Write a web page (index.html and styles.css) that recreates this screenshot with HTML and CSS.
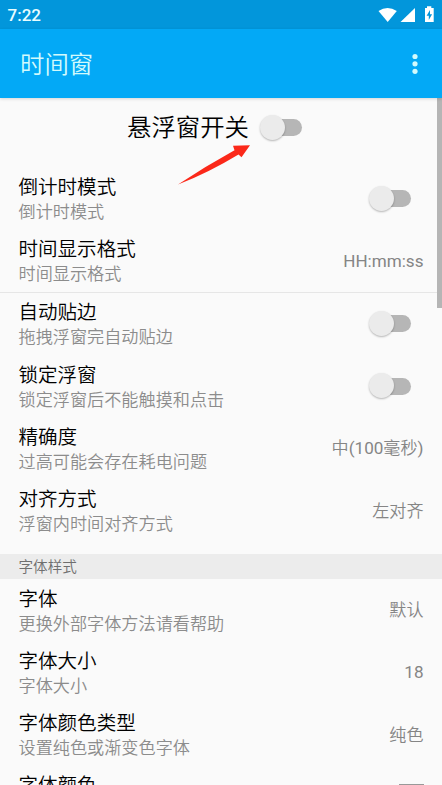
FILE: index.html
```html
<!DOCTYPE html>
<html lang="zh-CN">
<head>
<meta charset="utf-8">
<title>时间窗</title>
<link rel="stylesheet" href="styles.css">
</head>
<body>
<div class="screen">
  <header class="status">
    <span class="clock">7:22</span>
    <svg class="status-icons" width="56" height="18" viewBox="0 0 56 18" fill="#fff">
      <path d="M0.5 5Q9.5-1 18.8 5L9.7 16Z"/>
      <path d="M22.5 16H37V2Z"/>
      <path fill-rule="evenodd" d="M47 2H49V0.3H53.3V2H55.7V16H47ZM52 4L48.6 9.8H50.8V14L54.1 8.2H52Z"/>
    </svg>
  </header>
  <div class="appbar">
    <h1 class="appbar-title">时间窗</h1>
    <svg class="more" width="6" height="22" viewBox="0 0 6 22" fill="#d2fafc"><circle cx="3" cy="3.5" r="2.6"/><circle cx="3" cy="10.8" r="2.6"/><circle cx="3" cy="18.3" r="2.6"/></svg>
  </div>
  <main class="content">
    <div class="master"><span>悬浮窗开关</span><i class="switch"></i></div>
    <section class="group">
      <div class="row"><div class="label"><div class="title">倒计时模式</div><div class="summary">倒计时模式</div></div><i class="switch"></i></div>
      <div class="row"><div class="label"><div class="title">时间显示格式</div><div class="summary">时间显示格式</div></div><span class="value latin">HH:mm:ss</span></div>
    </section>
    <section class="group divided">
      <div class="row"><div class="label"><div class="title">自动贴边</div><div class="summary">拖拽浮窗完自动贴边</div></div><i class="switch"></i></div>
      <div class="row"><div class="label"><div class="title">锁定浮窗</div><div class="summary">锁定浮窗后不能触摸和点击</div></div><i class="switch"></i></div>
      <div class="row"><div class="label"><div class="title">精确度</div><div class="summary">过高可能会存在耗电问题</div></div><span class="value">中<span class="latin">(100</span>毫秒<span class="latin">)</span></span></div>
      <div class="row"><div class="label"><div class="title">对齐方式</div><div class="summary">浮窗内时间对齐方式</div></div><span class="value">左对齐</span></div>
    </section>
    <h2 class="section">字体样式</h2>
    <section class="group">
      <div class="row"><div class="label"><div class="title">字体</div><div class="summary">更换外部字体方法请看帮助</div></div><span class="value">默认</span></div>
      <div class="row"><div class="label"><div class="title">字体大小</div><div class="summary">字体大小</div></div><span class="value latin">18</span></div>
      <div class="row"><div class="label"><div class="title">字体颜色类型</div><div class="summary">设置纯色或渐变色字体</div></div><span class="value">纯色</span></div>
      <div class="row"><div class="label"><div class="title">字体颜色</div></div><i class="swatch"></i></div>
    </section>
    <svg class="arrow" width="76" height="44" viewBox="0 0 76 44"><path fill="#fb2819" d="M2 41.5Q30 23 58.5 7.3L57 2.7 74 2.3 65.5 14.2 62.5 11.5Q32 30 2 41.5Z"/></svg>
    <i class="scrollbar"></i>
  </main>
</div>
</body>
</html>
```
FILE: styles.css
```css
* { box-sizing: border-box; }
body {
  margin: 0;
  font-family: Roboto, "Noto Sans CJK SC", sans-serif;
  background: #fafafa;
}
.screen {
  height: 785px;
  overflow: hidden;
  display: flex;
  flex-direction: column;
}
.status {
  flex: none;
  height: 29px;
  padding: 0 8px 0 7.5px;
  background: #0296db;
  color: #e8fdff;
  display: flex;
  justify-content: space-between;
  align-items: center;
}
.clock { font-size: 17px; font-weight: 500; line-height: 20px; padding-top: 1px; }
.status-icons { margin-top: 1px; }
.appbar {
  flex: none;
  height: 69px;
  padding: 0 24px 0 20px;
  background: #03a9f6;
  display: flex;
  justify-content: space-between;
  align-items: center;
  box-shadow: 0 1px 3px rgba(0, 0, 0, .15);
  z-index: 1;
}
.appbar-title {
  margin: 0;
  padding-top: 2px;
  color: #d2fafc;
  font-size: 24.4px;
  font-weight: 350;
  line-height: 36px;
}
.content {
  position: relative;
  flex: 1;
  min-height: 0;
  overflow: hidden;
}
.master {
  height: 70px;
  padding: 0 13px 11px 0;
  display: flex;
  justify-content: center;
  align-items: center;
  gap: 11px;
  font-size: 24.4px;
  font-weight: 350;
  line-height: 36px;
  color: #000;
}
.row {
  height: 62.2px;
  padding: 0 18.5px;
  display: flex;
  justify-content: space-between;
  align-items: center;
}
.label { height: 50px; padding-top: 1px; }
.divided { border-top: 1px solid #e6e6e6; padding-bottom: 12px; }
.title { font-size: 19.55px; line-height: 26px; color: #000; font-weight: 350; }
.summary { font-size: 17.15px; line-height: 23px; color: #8c8c8c; font-weight: 350; }
.value { font-size: 17.1px; line-height: 24px; margin-top: -1px; color: #858585; font-weight: 350; }
.latin { font-weight: 400; }
.section {
  margin: 0 0 1px;
  height: 24.5px;
  padding-left: 18.5px;
  background: #ececec;
  color: #6f6f6f;
  font-size: 14.6px;
  font-weight: 350;
  line-height: 26px;
}
.switch {
  display: flex;
  align-items: center;
  flex: none;
  width: 42px;
  height: 26px;
  position: relative;
}
.row .switch { margin: 0 13px 1px 0; }
.switch::before {
  content: "";
  width: 34px;
  height: 17px;
  margin-left: 8px;
  border-radius: 9px;
  background: #b6b6b6;
}
.switch::after {
  content: "";
  position: absolute;
  left: 0;
  top: 0;
  width: 25px;
  height: 25px;
  border-radius: 50%;
  background: #ebebeb;
  box-shadow: 0 1px 2px rgba(0, 0, 0, .28);
}
.swatch { width: 25px; height: 25px; margin-bottom: 2px; border: 1px solid #999; background: #b5b5b5; }
.arrow { position: absolute; left: 176px; top: 45px; }
.scrollbar {
  position: absolute;
  right: 0;
  top: 0;
  width: 5px;
  height: 210px;
  background: #b5b5b5;
}
```
